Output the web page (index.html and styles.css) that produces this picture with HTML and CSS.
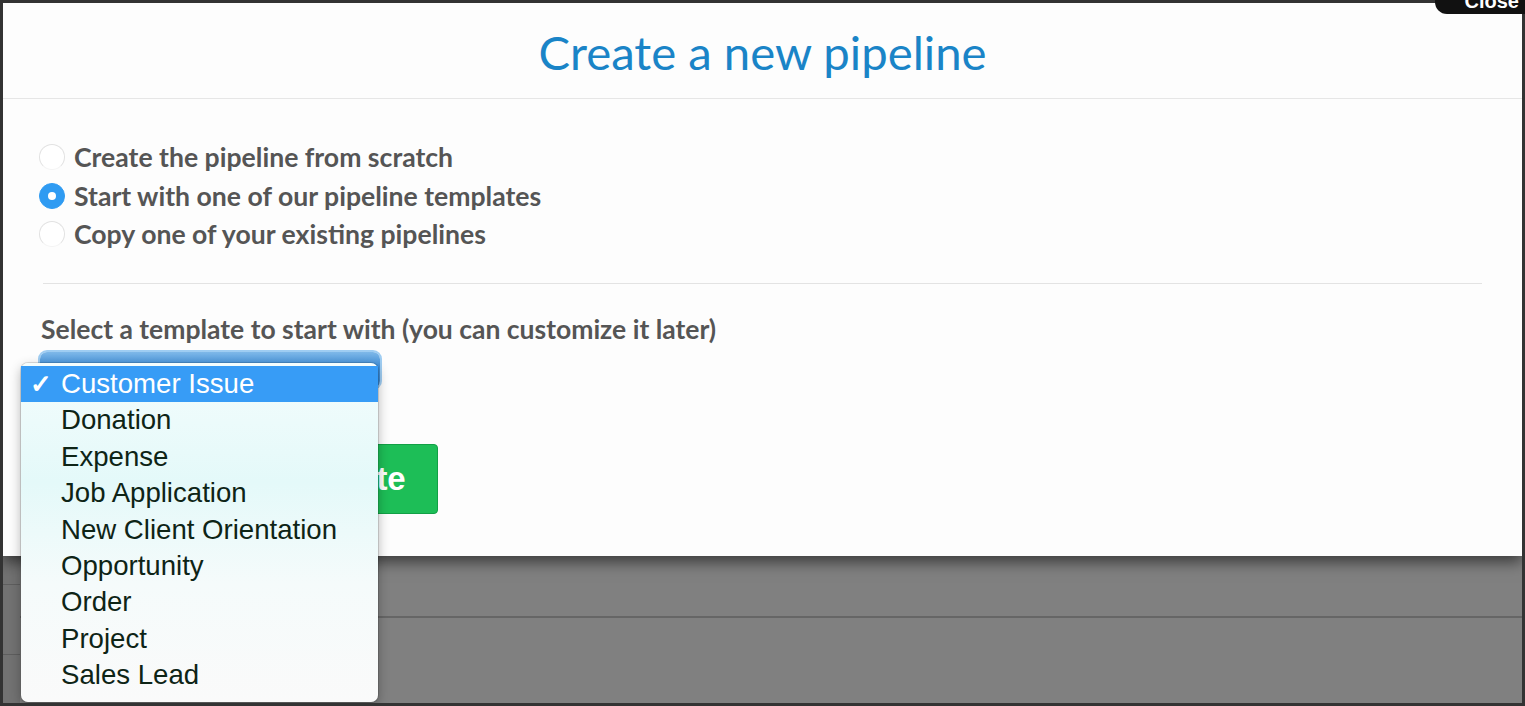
FILE: index.html
```html
<!DOCTYPE html>
<html lang="en">
<head>
    <meta charset="UTF-8">
    <meta name="viewport" content="width=device-width, initial-scale=1.0">
    <title>Create a new pipeline</title>
    <link rel="stylesheet" href="styles.css">
</head>
<body>

<div class="screen">
    <div class="modal">
        <div class="modal-header">
            <h1>Create a new pipeline</h1>
        </div>
        <div class="modal-body">
            <div class="radio-list">
                <label class="radio-row"><span class="radio"></span>Create the pipeline from scratch</label>
                <label class="radio-row"><span class="radio checked"></span>Start with one of our pipeline templates</label>
                <label class="radio-row"><span class="radio"></span>Copy one of your existing pipelines</label>
            </div>
            <hr class="divider">
            <p class="field-label">Select a template to start with (you can customize it later)</p>
            <div class="select-box"></div>
            <div class="actions">
                <button class="btn-create">Create</button>
            </div>
        </div>
    </div>

    <div class="backdrop">
        <div class="side">
            <div class="side-a"></div>
            <div class="side-b"></div>
        </div>
        <div class="main">
            <div class="main-a"></div>
        </div>
    </div>

    <ul class="menu">
        <li class="selected"><span class="check">&#10003;</span>Customer Issue</li>
        <li>Donation</li>
        <li>Expense</li>
        <li>Job Application</li>
        <li>New Client Orientation</li>
        <li>Opportunity</li>
        <li>Order</li>
        <li>Project</li>
        <li>Sales Lead</li>
    </ul>
</div>

<div class="close-tab">Close</div>

</body>
</html>
```

FILE: styles.css
```css
html, body {
    margin: 0;
    padding: 0;
}
body {
    background-color: #333;
    font-family: Lato, "Open Sans", sans-serif;
    width: 1525px;
    height: 706px;
    overflow: hidden;
    position: relative;
}
.screen {
    position: relative;
    margin: 3px;
    width: 1519px;
    height: 700px;
    background-color: #808080;
    display: flex;
    flex-direction: column;
    overflow: hidden;
}
.modal {
    height: 553px;
    flex: none;
    background-color: #fdfdfd;
    box-shadow: 0 6px 14px rgba(0, 0, 0, 0.55);
    position: relative;
    z-index: 1;
}
.modal-header {
    height: 95px;
    border-bottom: 1px solid #e6e6e6;
    text-align: center;
}
.modal-header h1 {
    margin: 0;
    font-weight: 400;
    font-size: 47.3px;
    line-height: 97px;
    color: #1a84c7;
}
.modal-body {
    padding: 39px 40px 0 37px;
}
.radio-row {
    display: flex;
    align-items: center;
    height: 38.5px;
    font-size: 26.6px;
    font-weight: 700;
    color: #555;
}
.radio {
    width: 24px;
    height: 24px;
    margin-left: -1px;
    margin-right: 9px;
    border-radius: 50%;
    border: 1px solid #e2e2e2;
    border-bottom-color: #f4f4f4;
    background-color: #fff;
    box-sizing: content-box;
    display: flex;
    align-items: center;
    justify-content: center;
}
.radio.checked {
    background-color: #2f9bf2;
    border-color: #2f9bf2;
}
.radio.checked::after {
    content: "";
    width: 8px;
    height: 8px;
    border-radius: 50%;
    background-color: #fff;
}
.divider {
    margin: 29px 0 0 3px;
    border: none;
    border-top: 1px solid #e3e3e3;
}
.field-label {
    margin: 30px 0 0 1px;
    font-size: 26.5px;
    line-height: 31px;
    font-weight: 700;
    color: #555;
}
.select-box {
    margin-top: 7px;
    width: 340px;
    height: 36px;
    border-radius: 7px;
    background: linear-gradient(#7fb8e8, #3f8fd9 40%, #3a8ad6);
    box-shadow: 0 0 0 2px #9fcdf2;
}
.actions {
    margin-top: 56px;
    padding-left: 222px;
}
.btn-create {
    height: 70px;
    padding: 0 31px 0 40px;
    border: 1px solid #12a046;
    border-radius: 4px;
    background-color: #1dbe57;
    color: #fff;
    font-family: "Liberation Sans", Arial, sans-serif;
    font-size: 33px;
    font-weight: 700;
}
.backdrop {
    flex: 1;
    display: flex;
}
.side {
    width: 17px;
    background-color: #727272;
}
.side-a {
    height: 28px;
    border-bottom: 1px solid #5e5e5e;
}
.side-b {
    height: 69px;
    border-bottom: 1px solid #5e5e5e;
}
.main {
    flex: 1;
}
.main-a {
    height: 60px;
    border-bottom: 2px solid #666;
}
.menu {
    position: absolute;
    left: 18px;
    top: 360px;
    z-index: 2;
    width: 357px;
    height: 339px;
    box-sizing: border-box;
    margin: 0;
    padding: 3px 0 0 0;
    list-style: none;
    border-radius: 7px;
    background: linear-gradient(#f4fdfd, #e4f9f9 35%, #f5fbfb 65%, #fafafa);
    box-shadow: 0 0 0 1px rgba(0, 0, 0, 0.12), 0 4px 12px rgba(0, 0, 0, 0.3);
    font-family: "Liberation Sans", Arial, sans-serif;
    font-size: 27.6px;
    color: #0e2416;
}
.menu li {
    position: relative;
    height: 36.4px;
    line-height: 36.4px;
    padding-left: 40px;
}
.menu li.selected {
    background-color: #379cf6;
    color: #fff;
}
.check {
    position: absolute;
    left: 9px;
    top: 0;
    font-size: 26px;
    font-weight: 700;
}
.close-tab {
    position: absolute;
    top: -10px;
    right: 0;
    z-index: 5;
    width: 90px;
    height: 24px;
    background-color: #111;
    border-bottom-left-radius: 12px;
    color: #fff;
    font-family: "Liberation Sans", Arial, sans-serif;
    font-weight: 700;
    font-size: 20px;
    line-height: 22px;
    text-align: right;
    padding-right: 6px;
    box-sizing: border-box;
}
```
